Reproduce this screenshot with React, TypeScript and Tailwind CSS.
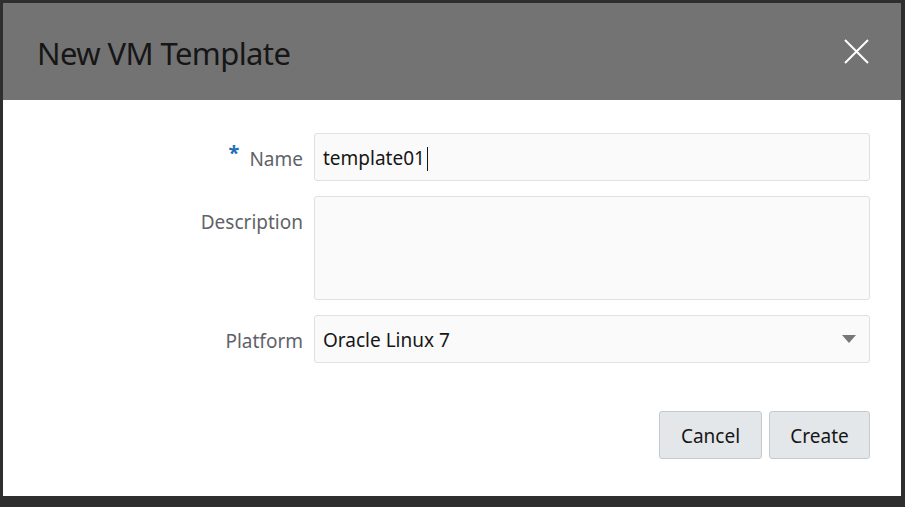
const fieldClass =
  "w-full rounded-[3px] border border-[#dfe1e3] bg-[#fafafa] px-2 text-[19px] text-[#161616] outline-none";

const App = () => {
  return (
    <div
      className="h-[507px] w-[905px] bg-[#2e2e2e] pl-[3px] pt-[3px]"
      style={{ fontFamily: '"Noto Sans", "Open Sans", sans-serif' }}
    >
      <div className="flex h-[493px] w-[898px] flex-col bg-white">
        {/* Header */}
        <div className="flex h-[97px] items-center justify-between bg-[#737373] pl-[34px] pr-[31px]">
          <h1 className="pt-[3px] text-[31px] font-normal tracking-[-0.6px] text-[#161616]">New VM Template</h1>
          <button className="flex h-[28px] w-[28px] items-center justify-center" title="Close">
            <svg width="25" height="25" viewBox="0 0 25 25" fill="none" stroke="white" strokeWidth="2">
              <path d="M1 1 L24 24 M24 1 L1 24" />
            </svg>
          </button>
        </div>

        {/* Form */}
        <div className="flex flex-col gap-[15px] pl-[311px] pr-[31px] pt-[33px]">
          <div className="relative flex items-center">
            <label className="absolute right-[calc(100%+11px)] flex items-center gap-[10px] whitespace-nowrap pt-[4px] text-[19px] text-[#5f6368]">
              <span className="-mt-[12px] text-[20px] font-bold text-[#1f6fb5]">*</span>
              Name
            </label>
            <div className="flex h-[48px] w-full items-center rounded-[3px] border border-[#dfe1e3] bg-[#fafafa] px-2 pt-[3px]">
              <span className="text-[19px] text-[#161616]">template01</span>
              <span className="ml-[2px] h-[24px] w-px bg-[#161616]" />
            </div>
          </div>

          <div className="relative flex">
            <label className="absolute right-[calc(100%+11px)] top-[12px] whitespace-nowrap text-[19px] text-[#5f6368]">
              Description
            </label>
            <textarea className={`${fieldClass} h-[104px] resize-none py-2`} />
          </div>

          <div className="relative flex items-center">
            <label className="absolute right-[calc(100%+11px)] whitespace-nowrap pt-[4px] text-[19px] text-[#5f6368]">
              Platform
            </label>
            <div className="flex h-[48px] w-full items-center justify-between rounded-[3px] border border-[#dfe1e3] bg-[#fafafa] pl-2 pr-[13px]">
              <span className="pt-[3px] text-[19px] text-[#161616]">Oracle Linux 7</span>
              <svg width="14" height="8" viewBox="0 0 14 8">
                <path d="M0 0 L14 0 L7 8 Z" fill="#777777" />
              </svg>
            </div>
          </div>
        </div>

        {/* Footer */}
        <div className="mt-[48px] flex justify-end gap-[7px] pr-[31px]">
          <button className="h-[48px] w-[103px] rounded-[3px] border border-[#c4cbd0] bg-[#e4e7ea] pt-[3px] text-[19px] text-[#161616]">
            Cancel
          </button>
          <button className="h-[48px] w-[101px] rounded-[3px] border border-[#c4cbd0] bg-[#e4e7ea] pt-[3px] text-[19px] text-[#161616]">
            Create
          </button>
        </div>
      </div>
    </div>
  );
};

export default App;
